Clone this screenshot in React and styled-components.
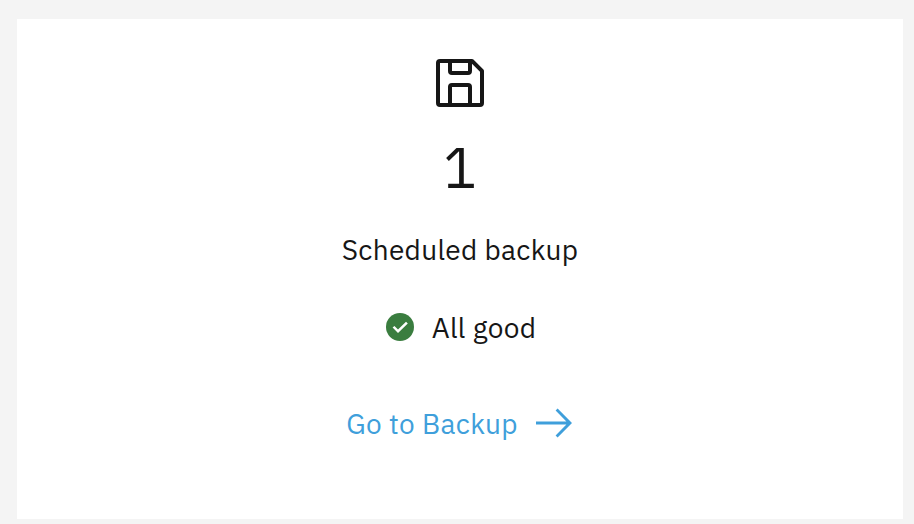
import styled, { createGlobalStyle } from "styled-components";

const GlobalStyle = createGlobalStyle`
  * {
    box-sizing: border-box;
  }
  body {
    margin: 0;
    background-color: #f4f4f4;
    font-family: "IBM Plex Sans", "Open Sans", "Noto Sans", sans-serif;
    font-size: 28px;
    line-height: 36px;
    letter-spacing: 0.32px;
    color: #161616;
  }
`;

const Page = styled.main`
  height: 524px;
  padding: 19px 11px 5px 17px;
`;

const Card = styled.section`
  display: flex;
  flex-direction: column;
  align-items: center;
  height: 500px;
  padding-top: 32px;
  background-color: #ffffff;
`;

const Icon = styled.svg`
  display: block;
  flex: none;
  width: ${({ $size }) => $size}px;
  height: ${({ $size }) => $size}px;
  fill: currentColor;
`;

const Count = styled.p`
  margin: 20px 0 0;
  font-family: "IBM Plex Sans", "DejaVu Sans Mono", monospace;
  font-size: 56px;
  line-height: 64px;
  letter-spacing: 0;
`;

const Label = styled.p`
  margin: 33px 0 0;
`;

const Status = styled.div`
  display: flex;
  align-items: center;
  gap: 16px;
  height: 36px;
  margin-top: 41px;
  color: #3a7d3f;
`;

const StatusText = styled.span`
  padding-top: 2px;
  color: #161616;
`;

const BackupLink = styled.a`
  display: flex;
  align-items: center;
  gap: 16px;
  height: 40px;
  margin-top: 58px;
  color: #3f9fdb;
  text-decoration: none;
`;

const LinkText = styled.span`
  padding-top: 2px;
`;

function SaveIcon() {
  return (
    <Icon $size={64} viewBox="0 0 32 32" aria-hidden="true">
      <path d="M27.71,9.29l-5-5A1,1,0,0,0,22,4H6A2,2,0,0,0,4,6V26a2,2,0,0,0,2,2H26a2,2,0,0,0,2-2V10A1,1,0,0,0,27.71,9.29ZM12,6h8v4H12Zm8,20H12V18h8Zm2,0V18a2,2,0,0,0-2-2H12a2,2,0,0,0-2,2v8H6V6h4v4a2,2,0,0,0,2,2h8a2,2,0,0,0,2-2V6.41l4,4V26Z" />
    </Icon>
  );
}

function CheckmarkIcon() {
  return (
    <Icon $size={32} viewBox="0 0 16 16" aria-hidden="true">
      <circle cx="8" cy="8" r="7" />
      <path fill="#ffffff" d="M7,11L4.3,8.3l0.9-0.8L7,9.3l4-3.9l0.9,0.8L7,11z" />
    </Icon>
  );
}

function ArrowIcon() {
  return (
    <Icon $size={40} viewBox="0 0 20 20" aria-hidden="true">
      <path d="M11.8 2.8 10.8 3.8 16.2 9.3 1 9.3 1 10.7 16.2 10.7 10.8 16.2 11.8 17.2 19 10z" />
    </Icon>
  );
}

export default function App() {
  return (
    <>
      <GlobalStyle />
      <Page>
        <Card>
          <SaveIcon />
          <Count>1</Count>
          <Label>Scheduled backup</Label>
          <Status>
            <CheckmarkIcon />
            <StatusText>All good</StatusText>
          </Status>
          <BackupLink href="#backup">
            <LinkText>Go to Backup</LinkText>
            <ArrowIcon />
          </BackupLink>
        </Card>
      </Page>
    </>
  );
}
